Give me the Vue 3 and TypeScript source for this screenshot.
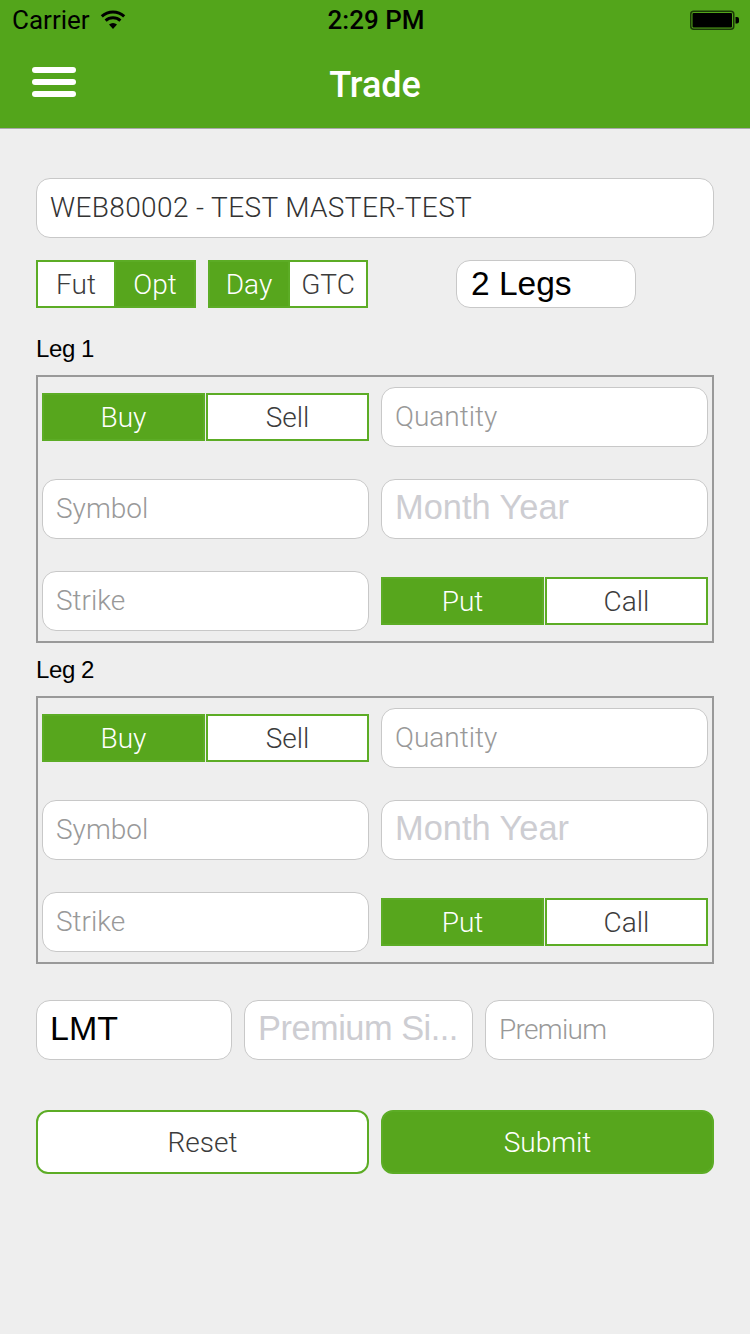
<script setup lang="ts">
interface Seg { label: string; on: boolean }
const legs: { name: string; side: Seg[]; right: Seg[] }[] = [
  { name: 'Leg 1', side: [{ label: 'Buy', on: true }, { label: 'Sell', on: false }], right: [{ label: 'Put', on: true }, { label: 'Call', on: false }] },
  { name: 'Leg 2', side: [{ label: 'Buy', on: true }, { label: 'Sell', on: false }], right: [{ label: 'Put', on: true }, { label: 'Call', on: false }] },
]
const product: Seg[] = [{ label: 'Fut', on: false }, { label: 'Opt', on: true }]
const tif: Seg[] = [{ label: 'Day', on: true }, { label: 'GTC', on: false }]
</script>

<template>
  <div class="page">
    <div class="top">
      <div class="status">
        <div class="status-left">
          <span>Carrier</span>
          <svg class="wifi" width="26" height="20" viewBox="0 0 26 20">
            <path d="M13 19 L9 14.6 A6 6 0 0 1 17 14.6 Z" fill="#000" />
            <path d="M5.6 10.6 A11 11 0 0 1 20.4 10.6" fill="none" stroke="#000" stroke-width="3" />
            <path d="M1.8 6.4 A16.4 16.4 0 0 1 24.2 6.4" fill="none" stroke="#000" stroke-width="3" />
          </svg>
        </div>
        <div class="clock">2:29 PM</div>
        <div class="status-right">
          <svg width="50" height="20" viewBox="0 0 50 20">
            <rect x="0.75" y="1.25" width="43" height="18" rx="3" fill="none" stroke="#1c3a08" stroke-width="1.5" />
            <rect x="2.5" y="3" width="39.5" height="14.5" rx="1" fill="#000" />
            <path d="M45.5 7 H47 A2 2 0 0 1 49 9 V11.5 A2 2 0 0 1 47 13.5 H45.5 Z" fill="#000" />
          </svg>
        </div>
      </div>
      <div class="nav">
        <div class="burger"><i></i><i></i><i></i></div>
        <div class="title">Trade</div>
        <div></div>
      </div>
    </div>

    <div class="content">
      <div class="field account">WEB80002 - TEST MASTER-TEST</div>

      <div class="options">
        <div class="seg">
          <div v-for="s in product" :key="s.label" class="cell" :class="{ on: s.on }">{{ s.label }}</div>
        </div>
        <div class="seg">
          <div v-for="s in tif" :key="s.label" class="cell" :class="{ on: s.on }">{{ s.label }}</div>
        </div>
        <div class="field legs">2 Legs</div>
      </div>

      <section v-for="leg in legs" :key="leg.name" class="leg">
        <div class="leg-name">{{ leg.name }}</div>
        <div class="leg-box">
          <div class="pair">
            <div v-for="s in leg.side" :key="s.label" class="tab" :class="{ on: s.on }">{{ s.label }}</div>
          </div>
          <div class="field ph">Quantity</div>
          <div class="field ph">Symbol</div>
          <div class="field ph-big">Month Year</div>
          <div class="field ph">Strike</div>
          <div class="pair">
            <div v-for="s in leg.right" :key="s.label" class="tab" :class="{ on: s.on }">{{ s.label }}</div>
          </div>
        </div>
      </section>

      <div class="pricing">
        <div class="field value">LMT</div>
        <div class="field ph-big tight">Premium Si...</div>
        <div class="field ph narrow">Premium</div>
      </div>

      <div class="actions">
        <div class="btn">Reset</div>
        <div class="btn primary">Submit</div>
      </div>
    </div>
  </div>
</template>

<style>
html, body { margin: 0; padding: 0; }
</style>

<style scoped>
.page {
  width: 750px;
  height: 1334px;
  background: #eeeeee;
  font-family: Roboto, "Liberation Sans", Arial, sans-serif;
  font-weight: 300;
  overflow: hidden;
}
.top {
  background: #53a51b;
  height: 128px;
  border-bottom: 1px solid #a9a9a9;
}
.status {
  height: 40px;
  display: grid;
  grid-template-columns: 1fr auto 1fr;
  align-items: center;
  padding: 0 10px 0 12px;
  font-family: Roboto, sans-serif;
  font-weight: 400;
  color: #000;
  font-size: 26px;
}
.status-left { display: flex; align-items: center; gap: 10px; }
.wifi { display: block; }
.clock { font-weight: 500; }
.status-right { display: flex; justify-content: flex-end; }
.nav {
  height: 88px;
  display: grid;
  grid-template-columns: 1fr auto 1fr;
  align-items: center;
}
.burger {
  margin-left: 32px;
  margin-top: -4px;
  width: 44px;
  display: flex;
  flex-direction: column;
  gap: 6px;
}
.burger i {
  display: block;
  height: 6px;
  border-radius: 3px;
  background: #fff;
}
.title {
  color: #fff;
  font-weight: 500;
  font-size: 36px;
  margin-top: 2px;
}
.content {
  padding: 49px 36px 0;
}
.field {
  box-sizing: border-box;
  height: 60px;
  background: #fff;
  border: 1px solid #c8c8c8;
  border-radius: 14px;
  display: flex;
  align-items: center;
  padding: 0 13px 2px;
  white-space: nowrap;
  overflow: hidden;
}
.account {
  font-size: 28px;
  letter-spacing: 0.37px;
  color: #333;
}
.options {
  display: flex;
  margin-top: 22px;
  height: 48px;
}
.seg {
  display: flex;
  width: 160px;
  height: 48px;
  margin-right: 12px;
}
.cell {
  box-sizing: border-box;
  flex: 0 0 80px;
  border: 2px solid #5cac25;
  display: flex;
  align-items: center;
  justify-content: center;
  background: #fff;
  color: #3c3c3c;
  font-size: 28px;
}
.cell + .cell {
  margin-left: -2px;
}
.cell.on {
  flex-basis: 82px;
  position: relative;
  background: #57a61d;
  color: #fff;
}
.legs {
  width: 180px;
  height: 48px;
  margin-left: 76px;
  padding: 0 14px 1px;
  font-family: "Liberation Sans", Arial, sans-serif;
  font-weight: 400;
  font-size: 33.5px;
  color: #000;
}
.leg:first-of-type {
  margin-top: 14px;
}
.leg-name {
  height: 53px;
  display: flex;
  align-items: center;
  font-family: "Liberation Sans", Arial, sans-serif;
  font-weight: 400;
  font-size: 24px;
  letter-spacing: -0.4px;
  color: #000;
}
.leg-box {
  box-sizing: border-box;
  height: 268px;
  border: 2px solid #999;
  padding: 10px 4px;
  display: grid;
  grid-template-columns: 327px 327px;
  grid-auto-rows: 60px;
  column-gap: 12px;
  row-gap: 32px;
}
.pair {
  display: flex;
  align-items: center;
  gap: 1px;
}
.tab {
  flex: 1;
  height: 48px;
  box-sizing: border-box;
  border: 2px solid #5cac25;
  display: flex;
  align-items: center;
  justify-content: center;
  background: #fff;
  color: #3c3c3c;
  font-size: 28px;
}
.tab.on {
  background: #57a61d;
  color: #fff;
}
.ph {
  font-size: 28px;
  color: #999;
}
.narrow {
  letter-spacing: -0.7px;
}
.ph-big {
  font-family: "Liberation Sans", Arial, sans-serif;
  font-weight: 400;
  font-size: 34.4px;
  padding-bottom: 3px;
  color: #cdcdd2;
}
.tight {
  letter-spacing: -0.5px;
}
.value {
  font-family: "Liberation Sans", Arial, sans-serif;
  font-weight: 400;
  font-size: 34px;
  padding-bottom: 4px;
  color: #000;
}
.pricing {
  display: grid;
  grid-template-columns: 196px 229px 229px;
  column-gap: 12px;
  margin-top: 36px;
}
.actions {
  display: grid;
  grid-template-columns: 333px 333px;
  column-gap: 12px;
  margin-top: 50px;
}
.btn {
  box-sizing: border-box;
  height: 64px;
  border: 2px solid #5cac25;
  border-radius: 12px;
  background: #fff;
  color: #3c3c3c;
  font-size: 28px;
  display: flex;
  align-items: center;
  justify-content: center;
}
.btn.primary {
  background: #57a61d;
  color: #fff;
}
</style>
